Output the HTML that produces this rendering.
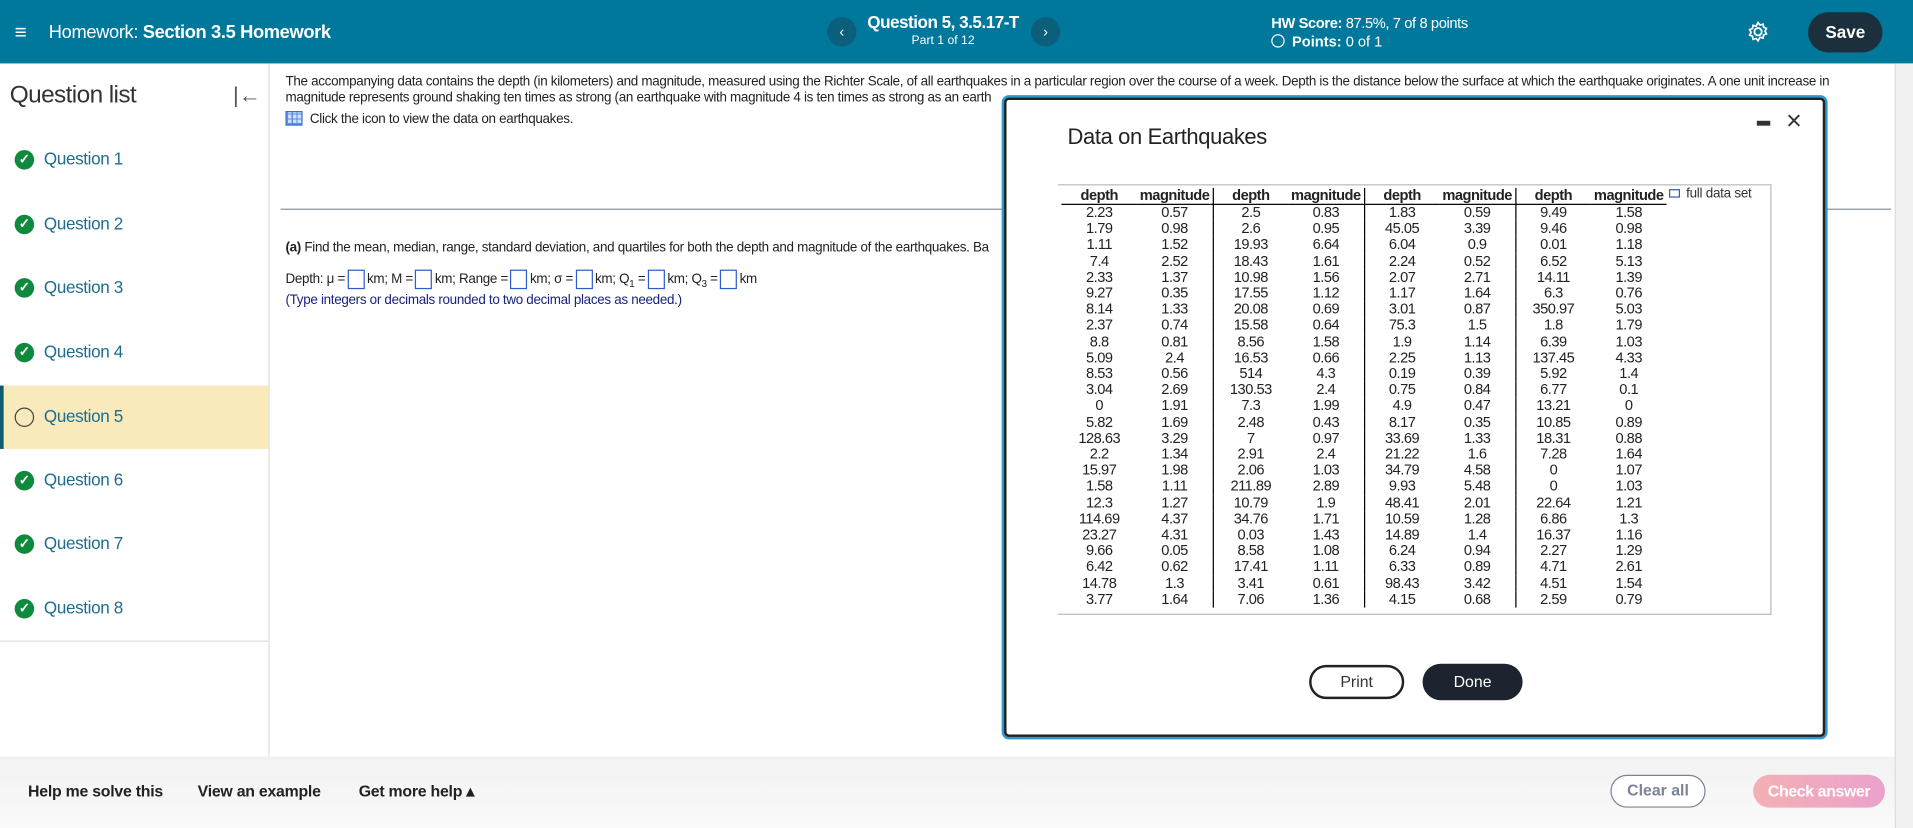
<!DOCTYPE html>
<html><head><meta charset="utf-8"><style>
*{margin:0;padding:0;box-sizing:border-box}
html,body{width:1913px;height:828px;overflow:hidden;background:#fff;font-family:"Liberation Sans",Arial,sans-serif;color:#222}
#w{position:absolute;left:0;top:0;width:1568px;height:679px;transform:scale(1.22003);transform-origin:0 0}
.a{position:absolute;white-space:nowrap}
.hdr{position:absolute;left:0;top:0;width:1568px;height:52px;background:#00789c;color:#fff}
.circ{position:absolute;width:24px;height:24px;border-radius:12px;background:#0b5f7a;color:#fff;font-size:12px;text-align:center;line-height:24px}
.q{position:absolute;left:0;width:220px;height:52px}
.q .ic{position:absolute;left:12px;top:18px;width:16px;height:16px;border-radius:8px;background:#0f8a3c;color:#fff;font-size:11px;font-weight:bold;text-align:center;line-height:16px}
.q .t{position:absolute;left:36px;top:17px;font-size:14px;color:#1f6d8e;letter-spacing:-0.3px}
table{border-collapse:collapse;font-size:12px;line-height:13.2px;letter-spacing:-0.4px}
td,th{text-align:center;padding:0;width:62px}
th{font-weight:bold;border-bottom:1px solid #000;line-height:13px}
.b{border-right:1px solid #000}
.box{display:inline-block;width:14px;height:16px;border:1px solid #2f5cc8;vertical-align:middle;margin:0 2px}
</style></head><body><div id="w">
<div class="hdr">
<div class="a" style="left:12px;top:17px;font-size:17px">&#8801;</div>
<div class="a" style="left:40px;top:18px;font-size:15px;letter-spacing:-0.3px">Homework: <b>Section 3.5 Homework</b></div>
<div class="circ" style="left:678px;top:14px">&#8249;</div>
<div class="a" style="left:700px;top:10px;width:146px;text-align:center;font-size:14px;font-weight:bold;letter-spacing:-0.4px">Question 5, 3.5.17-T</div>
<div class="a" style="left:700px;top:28px;width:146px;text-align:center;font-size:10px">Part 1 of 12</div>
<div class="circ" style="left:845px;top:14px">&#8250;</div>
<div class="a" style="left:1042px;top:12px;font-size:12px;letter-spacing:-0.3px"><b>HW Score:</b> 87.5%, 7 of 8 points</div>
<div class="a" style="left:1042px;top:27px;font-size:12px"><span style="display:inline-block;width:11px;height:11px;border:1.5px solid #fff;border-radius:6px;vertical-align:-1px;margin-right:6px"></span><b>Points:</b> 0 of 1</div>
<svg class="a" style="left:1432px;top:17px" width="18" height="18" viewBox="0 0 18 18"><circle cx="9" cy="9" r="3" fill="none" stroke="#fff" stroke-width="1.5"/><path d="M9 1.5l1.6 2 2.5-.7.4 2.5 2.4 1-1.2 2.2 1.2 2.2-2.4 1-.4 2.5-2.5-.7L9 16.5l-1.6-2-2.5.7-.4-2.5-2.4-1 1.2-2.2L2.1 7.3l2.4-1 .4-2.5 2.5.7z" fill="none" stroke="#fff" stroke-width="1.4"/></svg>
<div class="a" style="left:1482px;top:10px;width:61px;height:33px;border-radius:17px;background:#1b2f3d;font-size:14px;font-weight:bold;text-align:center;line-height:33px">Save</div>
</div>
<div class="a" style="left:220px;top:52px;width:1px;height:568px;background:#ddd"></div>
<div class="a" style="left:8px;top:67px;font-size:20px;color:#333;letter-spacing:-0.5px">Question list</div>
<div class="a" style="left:191px;top:68px;font-size:18px;color:#555">|&#8592;</div>
<div class="q" style="top:105px"><div class="ic">&#10003;</div><div class="t">Question 1</div></div>
<div class="q" style="top:158px"><div class="ic">&#10003;</div><div class="t">Question 2</div></div>
<div class="q" style="top:210px"><div class="ic">&#10003;</div><div class="t">Question 3</div></div>
<div class="q" style="top:263px"><div class="ic">&#10003;</div><div class="t">Question 4</div></div>
<div class="q" style="top:316px;background:#f9eabc;border-left:3px solid #0b5e70"><div class="ic" style="left:9px;background:none;border:1.5px solid #444"></div><div class="t" style="left:33px">Question 5</div></div>
<div class="q" style="top:368px"><div class="ic">&#10003;</div><div class="t">Question 6</div></div>
<div class="q" style="top:420px"><div class="ic">&#10003;</div><div class="t">Question 7</div></div>
<div class="q" style="top:473px"><div class="ic">&#10003;</div><div class="t">Question 8</div></div>
<div class="a" style="left:0;top:525px;width:220px;height:1px;background:#ddd"></div>
<div class="a" style="left:234px;top:61px;font-size:11px;line-height:13px;color:#222;white-space:normal;width:1310px;letter-spacing:-0.25px">The accompanying data contains the depth (in kilometers) and magnitude, measured using the Richter Scale, of all earthquakes in a particular region over the course of a week. Depth is the distance below the surface at which the earthquake originates. A one unit increase in magnitude represents ground shaking ten times as strong (an earthquake with magnitude 4 is ten times as strong as an earth</div>
<div class="a" style="left:234px;top:91px;font-size:11px;letter-spacing:-0.25px"><span style="display:inline-block;width:14px;height:12px;border:1px solid #2f6fd0;background:repeating-linear-gradient(90deg,#5b8de0 0 1px,transparent 1px 4px),repeating-linear-gradient(0deg,#5b8de0 0 1px,#cfe0fa 1px 4px);vertical-align:-2px;margin-right:6px"></span>Click the icon to view the data on earthquakes.</div>
<div class="a" style="left:230px;top:171px;width:1320px;height:1px;background:#8a8f9a"></div>
<div class="a" style="left:234px;top:197px;font-size:11px;letter-spacing:-0.25px"><b>(a)</b> Find the mean, median, range, standard deviation, and quartiles for both the depth and magnitude of the earthquakes. Ba</div>
<div class="a" style="left:234px;top:221px;font-size:11px;letter-spacing:-0.25px">Depth: &#956; =<span class="box"></span>km; M =<span class="box"></span>km; Range =<span class="box"></span>km; &#963; =<span class="box"></span>km; Q<sub style="font-size:8px">1</sub> =<span class="box"></span>km; Q<sub style="font-size:8px">3</sub> =<span class="box"></span>km</div>
<div class="a" style="left:234px;top:240px;font-size:11px;color:#1a237e;letter-spacing:-0.25px">(Type integers or decimals rounded to two decimal places as needed.)</div>
<div class="a" style="left:0;top:620px;width:1553px;height:59px;background:linear-gradient(#f2f2f2,#fafafa)"></div>
<div class="a" style="left:23px;top:641px;font-size:13px;font-weight:bold;color:#222;letter-spacing:-0.2px">Help me solve this</div>
<div class="a" style="left:162px;top:641px;font-size:13px;font-weight:bold;color:#222;letter-spacing:-0.2px">View an example</div>
<div class="a" style="left:294px;top:641px;font-size:13px;font-weight:bold;color:#222;letter-spacing:-0.2px">Get more help &#9652;</div>
<div class="a" style="left:1320px;top:635px;width:78px;height:27px;border:1.5px solid #7b8394;border-radius:14px;text-align:center;line-height:24px;font-size:13px;color:#7b8394;font-weight:bold;background:#fff">Clear all</div>
<div class="a" style="left:1437px;top:635px;width:108px;height:27px;border-radius:14px;text-align:center;line-height:27px;font-size:13px;color:#fff;font-weight:bold;background:linear-gradient(90deg,#f4b0b4,#eaa2cc);letter-spacing:-0.3px">Check answer</div>
<div class="a" style="left:1553px;top:52px;width:15px;height:627px;background:#f1f1f1;border-left:1px solid #ddd"></div>
<div class="a" style="left:823px;top:80px;width:673px;height:524px;border:2px solid #222;border-radius:4px;background:#fff;box-shadow:0 0 0 2px #2d98cc"></div>
<div class="a" style="left:875px;top:102px;font-size:18px;color:#222;letter-spacing:-0.3px">Data on Earthquakes</div>
<div class="a" style="left:1440px;top:99px;width:11px;height:4px;background:#333"></div>
<div class="a" style="left:1464px;top:86px;font-size:22px;color:#333">&#215;</div>
<div class="a" style="left:867px;top:151px;width:585px;height:353px;border:1px solid #bbb;border-left:0"></div>
<div class="a" style="left:1368px;top:153px;font-size:11px;color:#333;letter-spacing:-0.2px"><span style="display:inline-block;width:9px;height:7px;border:1px solid #3757c7;margin-right:5px"></span>full data set</div>
<table class="a" style="left:870px;top:154px">
<tr><th>depth</th><th class="b">magnitude</th><th>depth</th><th class="b">magnitude</th><th>depth</th><th class="b">magnitude</th><th>depth</th><th>magnitude</th></tr>
<tr><td>2.23</td><td class="b">0.57</td><td>2.5</td><td class="b">0.83</td><td>1.83</td><td class="b">0.59</td><td>9.49</td><td>1.58</td></tr>
<tr><td>1.79</td><td class="b">0.98</td><td>2.6</td><td class="b">0.95</td><td>45.05</td><td class="b">3.39</td><td>9.46</td><td>0.98</td></tr>
<tr><td>1.11</td><td class="b">1.52</td><td>19.93</td><td class="b">6.64</td><td>6.04</td><td class="b">0.9</td><td>0.01</td><td>1.18</td></tr>
<tr><td>7.4</td><td class="b">2.52</td><td>18.43</td><td class="b">1.61</td><td>2.24</td><td class="b">0.52</td><td>6.52</td><td>5.13</td></tr>
<tr><td>2.33</td><td class="b">1.37</td><td>10.98</td><td class="b">1.56</td><td>2.07</td><td class="b">2.71</td><td>14.11</td><td>1.39</td></tr>
<tr><td>9.27</td><td class="b">0.35</td><td>17.55</td><td class="b">1.12</td><td>1.17</td><td class="b">1.64</td><td>6.3</td><td>0.76</td></tr>
<tr><td>8.14</td><td class="b">1.33</td><td>20.08</td><td class="b">0.69</td><td>3.01</td><td class="b">0.87</td><td>350.97</td><td>5.03</td></tr>
<tr><td>2.37</td><td class="b">0.74</td><td>15.58</td><td class="b">0.64</td><td>75.3</td><td class="b">1.5</td><td>1.8</td><td>1.79</td></tr>
<tr><td>8.8</td><td class="b">0.81</td><td>8.56</td><td class="b">1.58</td><td>1.9</td><td class="b">1.14</td><td>6.39</td><td>1.03</td></tr>
<tr><td>5.09</td><td class="b">2.4</td><td>16.53</td><td class="b">0.66</td><td>2.25</td><td class="b">1.13</td><td>137.45</td><td>4.33</td></tr>
<tr><td>8.53</td><td class="b">0.56</td><td>514</td><td class="b">4.3</td><td>0.19</td><td class="b">0.39</td><td>5.92</td><td>1.4</td></tr>
<tr><td>3.04</td><td class="b">2.69</td><td>130.53</td><td class="b">2.4</td><td>0.75</td><td class="b">0.84</td><td>6.77</td><td>0.1</td></tr>
<tr><td>0</td><td class="b">1.91</td><td>7.3</td><td class="b">1.99</td><td>4.9</td><td class="b">0.47</td><td>13.21</td><td>0</td></tr>
<tr><td>5.82</td><td class="b">1.69</td><td>2.48</td><td class="b">0.43</td><td>8.17</td><td class="b">0.35</td><td>10.85</td><td>0.89</td></tr>
<tr><td>128.63</td><td class="b">3.29</td><td>7</td><td class="b">0.97</td><td>33.69</td><td class="b">1.33</td><td>18.31</td><td>0.88</td></tr>
<tr><td>2.2</td><td class="b">1.34</td><td>2.91</td><td class="b">2.4</td><td>21.22</td><td class="b">1.6</td><td>7.28</td><td>1.64</td></tr>
<tr><td>15.97</td><td class="b">1.98</td><td>2.06</td><td class="b">1.03</td><td>34.79</td><td class="b">4.58</td><td>0</td><td>1.07</td></tr>
<tr><td>1.58</td><td class="b">1.11</td><td>211.89</td><td class="b">2.89</td><td>9.93</td><td class="b">5.48</td><td>0</td><td>1.03</td></tr>
<tr><td>12.3</td><td class="b">1.27</td><td>10.79</td><td class="b">1.9</td><td>48.41</td><td class="b">2.01</td><td>22.64</td><td>1.21</td></tr>
<tr><td>114.69</td><td class="b">4.37</td><td>34.76</td><td class="b">1.71</td><td>10.59</td><td class="b">1.28</td><td>6.86</td><td>1.3</td></tr>
<tr><td>23.27</td><td class="b">4.31</td><td>0.03</td><td class="b">1.43</td><td>14.89</td><td class="b">1.4</td><td>16.37</td><td>1.16</td></tr>
<tr><td>9.66</td><td class="b">0.05</td><td>8.58</td><td class="b">1.08</td><td>6.24</td><td class="b">0.94</td><td>2.27</td><td>1.29</td></tr>
<tr><td>6.42</td><td class="b">0.62</td><td>17.41</td><td class="b">1.11</td><td>6.33</td><td class="b">0.89</td><td>4.71</td><td>2.61</td></tr>
<tr><td>14.78</td><td class="b">1.3</td><td>3.41</td><td class="b">0.61</td><td>98.43</td><td class="b">3.42</td><td>4.51</td><td>1.54</td></tr>
<tr><td>3.77</td><td class="b">1.64</td><td>7.06</td><td class="b">1.36</td><td>4.15</td><td class="b">0.68</td><td>2.59</td><td>0.79</td></tr>
</table>
<div class="a" style="left:1073px;top:545px;width:78px;height:28px;border:2px solid #222;border-radius:14px;text-align:center;line-height:24px;font-size:13px;color:#333">Print</div>
<div class="a" style="left:1166px;top:544px;width:82px;height:30px;border-radius:15px;background:#1e2330;text-align:center;line-height:30px;font-size:13px;color:#fff">Done</div>
</div></body></html>
